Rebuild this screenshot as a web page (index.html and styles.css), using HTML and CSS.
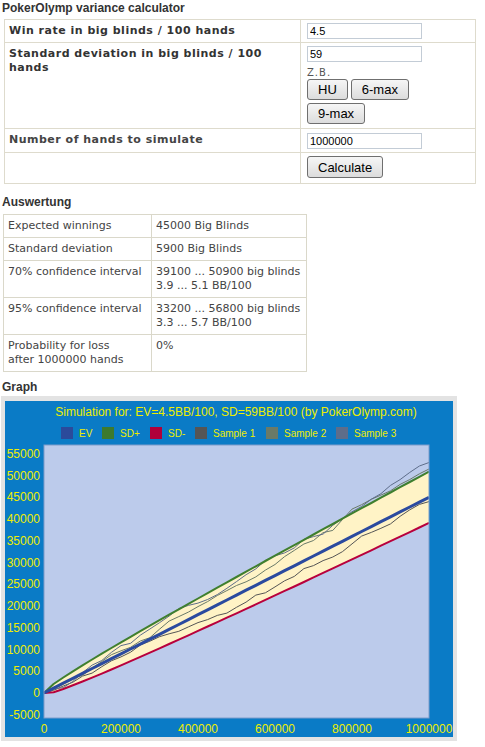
FILE: index.html
```html
<!DOCTYPE html>
<html lang="en">
<head>
    <meta charset="UTF-8">
    <meta name="viewport" content="width=device-width, initial-scale=1.0">
    <title>PokerOlymp variance calculator</title>
    <link rel="stylesheet" href="styles.css">
</head>
<body>
    <h1 class="page-title">PokerOlymp variance calculator</h1>
    <table class="calc-table">
        <tr>
            <td class="calc-label">Win rate in big blinds / 100 hands</td>
            <td class="calc-field"><input type="text" id="winrate" value="4.5"></td>
        </tr>
        <tr>
            <td class="calc-label">Standard deviation in big blinds / 100 hands</td>
            <td class="calc-field stddev-field">
                <input type="text" id="stddev" value="59">
                <div class="hint">Z.B.</div>
                <div class="presets">
                    <button type="button" class="btn">HU</button>
                    <button type="button" class="btn">6-max</button>
                    <button type="button" class="btn">9-max</button>
                </div>
            </td>
        </tr>
        <tr>
            <td class="calc-label light">Number of hands to simulate</td>
            <td class="calc-field hands-field"><input type="text" id="hands" value="1000000"></td>
        </tr>
        <tr>
            <td class="calc-label"></td>
            <td class="calc-field submit-field"><button type="button" class="btn calc-btn">Calculate</button></td>
        </tr>
    </table>

    <h2 class="section-title">Auswertung</h2>
    <table class="result-table">
        <tr><td class="result-name">Expected winnings</td><td>45000 Big Blinds</td></tr>
        <tr><td class="result-name">Standard deviation</td><td>5900 Big Blinds</td></tr>
        <tr><td class="result-name">70% confidence interval</td><td>39100 ... 50900 big blinds<br>3.9 ... 5.1 BB/100</td></tr>
        <tr><td class="result-name">95% confidence interval</td><td>33200 ... 56800 big blinds<br>3.3 ... 5.7 BB/100</td></tr>
        <tr><td class="result-name">Probability for loss<br>after 1000000 hands</td><td>0%</td></tr>
    </table>

    <h2 class="section-title graph-title">Graph</h2>
    <div class="graph-frame">
        <svg id="graph" width="448" height="336" viewBox="0 0 448 336"></svg>
    </div>

    <script>
        const NS = 'http://www.w3.org/2000/svg';
        const svg = document.getElementById('graph');

        const winrate = 4.5, stddev = 59, hands = 1000000, steps = 40;
        const plot = { left: 39, right: 424, top: 44, bottom: 317 };

        function px(n) { return plot.left + n * (plot.right - plot.left) / hands; }
        function py(v) { return 292 - v * 0.00435; }

        function el(name, attrs, text) {
            const node = document.createElementNS(NS, name);
            for (const k in attrs) node.setAttribute(k, attrs[k]);
            if (text !== undefined) node.textContent = text;
            svg.appendChild(node);
            return node;
        }

        function line(points, color, width) {
            const d = points.map((p, i) => (i ? 'L' : 'M') + p[0].toFixed(1) + ' ' + p[1].toFixed(1)).join(' ');
            el('path', { d: d, fill: 'none', stroke: color, 'stroke-width': width, 'stroke-linejoin': 'round' });
        }

        // seeded random so the samples stay the same on reload
        let seed = 4711;
        function rnd() { seed = (seed * 16807) % 2147483647; return seed / 2147483647; }
        function gauss() { return Math.sqrt(-2 * Math.log(rnd())) * Math.cos(2 * Math.PI * rnd()); }

        function sample(target, noise) {
            const walk = [0];
            for (let i = 1; i <= steps; i++) walk.push(walk[i - 1] + gauss() * noise);
            return walk.map((w, i) => {
                const n = i * hands / steps;
                return [px(n), py(w - walk[steps] * i / steps + target * i / steps)];
            });
        }

        const ev = [], upper = [], lower = [];
        for (let i = 0; i <= steps; i++) {
            const n = i * hands / steps;
            const e = winrate * n / 100, s = stddev * Math.sqrt(n / 100);
            ev.push([px(n), py(e)]);
            upper.push([px(n), py(e + s)]);
            lower.push([px(n), py(Math.max(e - s, 0))]);
        }

        el('rect', { x: 0, y: 0, width: 448, height: 336, fill: '#0a7bc6' });
        el('rect', { x: plot.left, y: plot.top, width: plot.right - plot.left, height: plot.bottom - plot.top, fill: '#bccbeb' });

        const band = upper.concat(lower.slice().reverse()).map(p => p[0].toFixed(1) + ',' + p[1].toFixed(1)).join(' ');
        el('polygon', { points: band, fill: '#fff3c6' });

        line(sample(44000, 420), '#555555', 1);
        line(sample(51500, 400), '#6a7a68', 1);
        line(sample(53000, 420), '#5d6d8a', 1);
        line(lower, '#b8003c', 2);
        line(upper, '#3f7f2f', 2);
        line(ev, '#2b4a9f', 3);

        el('rect', { x: plot.left, y: plot.top, width: plot.right - plot.left, height: plot.bottom - plot.top, fill: 'none', stroke: '#7d9cca', 'stroke-width': 1 });

        el('text', { x: 231, y: 15, 'text-anchor': 'middle', class: 'chart-text' },
            'Simulation for: EV=4.5BB/100, SD=59BB/100 (by PokerOlymp.com)');

        const legend = [
            ['EV', '#2b4a9b', 56], ['SD+', '#3d7a2e', 97], ['SD-', '#b0003a', 145],
            ['Sample 1', '#555555', 190], ['Sample 2', '#6a7a68', 261], ['Sample 3', '#5d6d8a', 331]
        ];
        legend.forEach(item => {
            el('rect', { x: item[2], y: 26, width: 12, height: 12, fill: item[1] });
            el('text', { x: item[2] + 18, y: 36, class: 'chart-text legend-text' }, item[0]);
        });

        for (let v = -5000; v <= 55000; v += 5000) {
            el('text', { x: 35, y: py(v) + 4, 'text-anchor': 'end', class: 'chart-text' }, v);
        }
        for (let n = 0; n <= hands; n += 200000) {
            el('text', { x: px(n), y: 332, 'text-anchor': 'middle', class: 'chart-text' }, n);
        }
    </script>
</body>
</html>
```

FILE: styles.css
```css
body {
    margin: 0;
    font-family: "DejaVu Sans", Verdana, sans-serif;
    font-size: 11px;
    color: #444;
    background-color: #fff;
}
.page-title,
.section-title {
    font: bold 12px/15px "Liberation Sans", Arial, sans-serif;
    color: #333;
    margin: 0;
    padding: 1px 0 0 2px;
}
.calc-table {
    border-collapse: collapse;
    margin: 3px 0 0 4px;
    width: 472px;
}
.calc-table td {
    border: 1px solid #dedbcd;
    padding: 3px 4px;
    vertical-align: top;
}
.calc-label {
    width: 287px;
    font-weight: bold;
    color: #333;
    line-height: 14px;
    letter-spacing: 0.5px;
    padding-top: 4px !important;
}
.calc-label.light {
    color: #444;
}
.calc-field {
    padding-left: 6px !important;
}
.stddev-field {
    padding-bottom: 4px !important;
}
.hands-field {
    padding-top: 4px !important;
}
.submit-field {
    padding-bottom: 5px !important;
}
.calc-field input {
    display: block;
    width: 115px;
    height: 16px;
    box-sizing: border-box;
    border: 1px solid #c3ccd6;
    padding: 0 2px;
    font: 11px "Liberation Sans", Arial, sans-serif;
    color: #000;
}
.hint {
    font-size: 10px;
    line-height: 12px;
    color: #555;
    letter-spacing: 1px;
    padding: 5px 0 0;
}
.presets {
    display: flex;
    flex-wrap: wrap;
    gap: 3px;
    width: 110px;
}
.btn {
    height: 21px;
    padding: 0 10px;
    border: 1px solid #6f6f6f;
    border-radius: 3px;
    background: linear-gradient(#f6f6f6, #dcdcdc);
    font: 13px "Liberation Sans", Arial, sans-serif;
    color: #000;
}
.calc-btn {
    height: 22px;
}
.section-title {
    margin-top: 10px;
}
.result-table {
    border-collapse: collapse;
    margin: 4px 0 0 3px;
    width: 304px;
}
.result-table td {
    border: 1px solid #dad8ca;
    padding: 4px 4px 4px;
    line-height: 14px;
    vertical-align: top;
    white-space: nowrap;
}
.result-name {
    width: 139px;
}
.graph-title {
    margin-top: 7px;
}
.graph-frame {
    display: inline-block;
    margin: 1px 0 0 1px;
    padding: 5px 4px 4px;
    background-color: #e3e3e3;
}
.graph-frame svg {
    display: block;
}
.chart-text {
    font: 12px "Liberation Sans", Arial, sans-serif;
    fill: #eeee00;
}
.chart-text.legend-text {
    font-size: 10px;
}
```
